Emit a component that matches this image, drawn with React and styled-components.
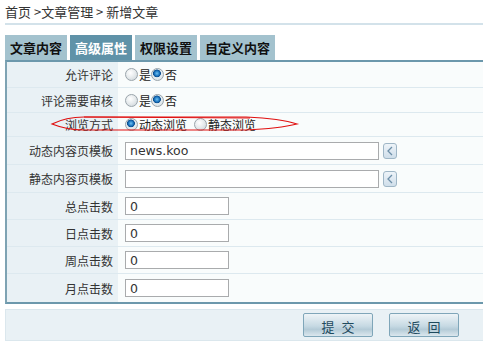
import React from "react";
import styled, { createGlobalStyle } from "styled-components";

const Global = createGlobalStyle`
  html, body { margin: 0; padding: 0; background: #fff; overflow: hidden; }
  body { font-family: "Noto Sans CJK SC", "Noto Sans", sans-serif; font-size: 12px; color: #333; }
`;

const Page = styled.div`
  position: relative;
  width: 500px;
  padding: 0 0 0 5px;
`;

const Crumb = styled.div`
  height: 23px;
  line-height: 24px;
  font-size: 13px;
  color: #333;
  border-bottom: 2px solid #d3e2ea;
`;

const Tabs = styled.div`
  display: flex;
  gap: 3px;
  margin-top: 10px;
  height: 25px;
`;

const Tab = styled.div`
  height: 25px;
  line-height: 26px;
  padding: 0 5px;
  font-size: 13px;
  font-weight: bold;
  color: ${(p) => (p.$active ? "#fff" : "#111")};
  background: ${(p) => (p.$active ? "#5f92a8" : "#a3c2ce")};
`;

const Table = styled.div`
  border-top: 2px solid #6c98ac;
  border-left: 2px solid #7ea3b3;
  border-bottom: 2px solid #6c98ac;
`;

const Row = styled.div`
  display: grid;
  grid-template-columns: 111px 1fr;
  height: ${(p) => p.$h}px;
  border-bottom: ${(p) => (p.$last ? "none" : "1px solid #dde9ef")};
  box-sizing: border-box;
`;

const Label = styled.div`
  background: #e9f1f5;
  padding-right: 5px;
  display: flex;
  align-items: center;
  justify-content: flex-end;
  font-size: 12px;
  color: #333;
`;

const Value = styled.div`
  background: #f9fcfc;
  display: flex;
  align-items: center;
  padding-left: 7px;
  font-size: 12px;
  color: #222;
`;

const RadioDot = styled.span`
  display: inline-block;
  width: 11px;
  height: 11px;
  border-radius: 50%;
  border: 1px solid #9aa4ab;
  background: ${(p) =>
    p.$on
      ? "radial-gradient(circle at 45% 40%, #6fc1f2 0, #1a74bf 2.5px, #0b4c8c 3.6px, #e6eef2 4.2px, #cfd8dd 100%)"
      : "radial-gradient(circle at 40% 35%, #ffffff 0, #e8ecee 45%, #c9d1d6 100%)"};
  margin-right: 1px;
`;

const Opt = styled.label`
  display: inline-flex;
  align-items: center;
  margin-right: ${(p) => p.$mr || 0}px;
`;

const TextInput = styled.input`
  box-sizing: border-box;
  width: ${(p) => p.$w}px;
  height: 18px;
  border: 1px solid #a9abad;
  padding: 0 4px;
  font-family: "DejaVu Sans", Verdana, sans-serif;
  font-size: 12.5px;
  color: #333;
  background: #fff;
  outline: none;
`;

const PickBtn = styled.span`
  box-sizing: border-box;
  width: 14px;
  height: 16px;
  margin-left: 4px;
  border: 1px solid #9fb6c6;
  border-radius: 3px;
  background: linear-gradient(#eef4f9, #cfdeea);
  display: inline-flex;
  align-items: center;
  justify-content: center;
`;

const Footer = styled.div`
  margin-top: 5px;
  height: 32px;
  background: #e9f1f5;
  border: 1px solid #dbe7ed;
  box-sizing: border-box;
  display: flex;
  align-items: center;
  padding-left: 297px;
  gap: 16px;
`;

const Button = styled.button`
  width: 70px;
  height: 24px;
  border: 1px solid #7fa6b9;
  border-radius: 2px;
  background: linear-gradient(#eef4f7 0%, #c6d9e3 55%, #b4cbd7 70%, #dbe7ee 100%);
  font-family: "Noto Sans CJK SC", sans-serif;
  font-size: 13px;
  color: #1e4a5e;
  letter-spacing: 7px;
  padding: 2px 0 0 7px;
  cursor: pointer;
`;

const Mark = styled.svg`
  position: absolute;
  left: 0;
  top: 0;
  pointer-events: none;
`;

const Radio = ({ on, children, mr }) => (
  <Opt $mr={mr}>
    <RadioDot $on={on} />
    {children}
  </Opt>
);

const Picker = () => (
  <PickBtn>
    <svg width="8" height="10" viewBox="0 0 8 10">
      <path d="M6 1 L2 5 L6 9" fill="none" stroke="#6d8fa8" strokeWidth="1.3" />
    </svg>
  </PickBtn>
);

export default function App() {
  return (
    <>
      <Global />
      <Page>
        <Crumb>首页 &gt;文章管理 &gt; 新增文章</Crumb>
        <Tabs>
          <Tab>文章内容</Tab>
          <Tab $active>高级属性</Tab>
          <Tab>权限设置</Tab>
          <Tab>自定义内容</Tab>
        </Tabs>
        <Table>
          <Row $h={26}>
            <Label>允许评论</Label>
            <Value>
              <Radio>是</Radio>
              <Radio on>否</Radio>
            </Value>
          </Row>
          <Row $h={25}>
            <Label>评论需要审核</Label>
            <Value>
              <Radio>是</Radio>
              <Radio on>否</Radio>
            </Value>
          </Row>
          <Row $h={24}>
            <Label>浏览方式</Label>
            <Value>
              <Radio on mr={7}>动态浏览</Radio>
              <Radio>静态浏览</Radio>
            </Value>
          </Row>
          <Row $h={28}>
            <Label>动态内容页模板</Label>
            <Value>
              <TextInput $w={254} defaultValue="news.koo" spellCheck={false} />
              <Picker />
            </Value>
          </Row>
          <Row $h={28}>
            <Label>静态内容页模板</Label>
            <Value>
              <TextInput $w={254} defaultValue="" />
              <Picker />
            </Value>
          </Row>
          <Row $h={27}>
            <Label>总点击数</Label>
            <Value>
              <TextInput $w={104} defaultValue="0" />
            </Value>
          </Row>
          <Row $h={27}>
            <Label>日点击数</Label>
            <Value>
              <TextInput $w={104} defaultValue="0" />
            </Value>
          </Row>
          <Row $h={27}>
            <Label>周点击数</Label>
            <Value>
              <TextInput $w={104} defaultValue="0" />
            </Value>
          </Row>
          <Row $h={28} $last>
            <Label>月点击数</Label>
            <Value>
              <TextInput $w={104} defaultValue="0" />
            </Value>
          </Row>
        </Table>
        <Footer>
          <Button>提交</Button>
          <Button>返回</Button>
        </Footer>
        <Mark width="483" height="362">
          <path
            d="M52 124 C62 119 74 117 84 117 L246 117 C268 118 285 120 297 124 C285 127 268 129 246 130 L84 130 C74 130 62 128 52 124 Z"
            fill="none"
            stroke="#e01010"
            strokeWidth="1.2"
          />
          <path d="M84 117 L250 118" fill="none" stroke="#e01010" strokeWidth="1" />
        </Mark>
      </Page>
    </>
  );
}
